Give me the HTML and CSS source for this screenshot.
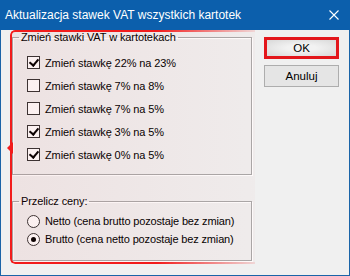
FILE: index.html
```html
<!DOCTYPE html>
<html lang="pl">
<head>
	<meta charset="UTF-8">
	<title>Aktualizacja stawek VAT</title>
	<link rel="stylesheet" href="styles.css">
</head>
<body>
<div class="window">
    <div class="titlebar">
        <span class="title">Aktualizacja stawek VAT wszystkich kartotek</span>
        <svg class="close" width="10" height="10" viewBox="0 0 10 10">
            <path d="M0.5 0.5 L9.5 9.5 M9.5 0.5 L0.5 9.5" stroke="#fff" stroke-width="1.1" fill="none"/>
        </svg>
    </div>
    <div class="client">
        <div class="mark">
            <fieldset class="group group-rates">
                <legend>Zmień stawki VAT w kartotekach</legend>
                <label class="row"><span class="check on"></span>Zmień stawkę 22% na 23%</label>
                <label class="row"><span class="check"></span>Zmień stawkę 7% na 8%</label>
                <label class="row"><span class="check"></span>Zmień stawkę 7% na 5%</label>
                <label class="row"><span class="check on"></span>Zmień stawkę 3% na 5%</label>
                <label class="row"><span class="check on"></span>Zmień stawkę 0% na 5%</label>
            </fieldset>
            <fieldset class="group group-prices">
                <legend>Przelicz ceny:</legend>
                <label class="row row-radio"><span class="radio"></span>Netto (cena brutto pozostaje bez zmian)</label>
                <label class="row row-radio"><span class="radio on"></span>Brutto (cena netto pozostaje bez zmian)</label>
            </fieldset>
            <svg class="notch" width="6" height="12" viewBox="0 0 6 12">
                <polygon points="6,0 0,6 6,12" fill="#f21c1c"/>
            </svg>
        </div>
        <div class="buttons">
            <button class="btn btn-default">OK</button>
            <button class="btn">Anuluj</button>
        </div>
    </div>
</div>
</body>
</html>
```
FILE: styles.css
```css
*
{
    margin: 0;
    padding: 0;
    box-sizing: border-box;
}
body
{
    font-family: "Liberation Sans", Arial, sans-serif;
    font-size: 11px;
    letter-spacing: -0.1px;
    color: #000;
    background: #f0f0f0;
}
.window
{
    width: 350px;
    height: 276px;
    border: 1px solid #1a64a8;
    border-top: 0;
    background: #f0f0f0;
}
.titlebar
{
    display: flex;
    align-items: center;
    justify-content: space-between;
    height: 30px;
    margin: 0 -1px;
    padding: 0 11px 1px 5px;
    background: #0c5fac;
    color: #fff;
}
.title
{
    font-size: 12px;
    letter-spacing: 0;
    line-height: 16px;
    white-space: nowrap;
}
.close
{
    display: block;
}
.client
{
    display: flex;
    align-items: flex-start;
    padding-left: 9px;
}
.mark
{
    position: relative;
    width: 245px;
    height: 234px;
    padding-left: 2px;
}
/* red bracket drawn over the screenshot */
.mark::before
{
    content: "";
    position: absolute;
    top: 0;
    left: 0;
    right: 0;
    bottom: 0;
    border: 2px solid #f21c1c;
    border-right: 0;
    border-radius: 5px 0 0 5px;
    box-shadow: 0 2px 2px rgba(240, 60, 60, .3);
    -webkit-mask-image: linear-gradient(to right, #000 60%, rgba(0, 0, 0, .12));
    mask-image: linear-gradient(to right, #000 60%, rgba(0, 0, 0, .12));
}
.mark::after
{
    content: "";
    position: absolute;
    top: 2px;
    left: 2px;
    right: 0;
    bottom: 2px;
    background: linear-gradient(to right, rgba(200, 40, 40, .07), rgba(200, 40, 40, .025));
    pointer-events: none;
}
.notch
{
    position: absolute;
    left: -3px;
    top: 112px;
}
.group
{
    width: 240px;
    border: 1px solid #a9a9a9;
    box-shadow: inset 1px 1px 0 #fff, 1px 1px 0 #fff;
    padding: 0 0 8px 0;
}
.group legend
{
    margin-left: 6px;
    padding: 0 2px;
    line-height: 15px;
    white-space: nowrap;
}
.group-rates
{
    height: 145px;
    padding-top: 6px;
}
.group-prices
{
    margin-top: 19px;
    height: 67px;
    padding-top: 3px;
}
.row
{
    display: flex;
    align-items: center;
    height: 23px;
    padding-left: 14px;
    white-space: nowrap;
}
.row-radio
{
    height: 18px;
    letter-spacing: -0.15px;
}
.check
{
    width: 13px;
    height: 13px;
    margin-right: 5px;
    border: 1px solid #333;
    background: #fff;
    position: relative;
}
.check.on::after
{
    content: "";
    position: absolute;
    left: 3px;
    top: 0px;
    width: 4px;
    height: 7px;
    border: solid #000;
    border-width: 0 2px 2px 0;
    transform: rotate(40deg);
}
.radio
{
    width: 13px;
    height: 13px;
    margin-right: 5px;
    border: 1px solid #333;
    border-radius: 50%;
    background: #fff;
    position: relative;
}
.radio.on::after
{
    content: "";
    position: absolute;
    left: 3px;
    top: 3px;
    width: 5px;
    height: 5px;
    border-radius: 50%;
    background: #000;
}
.buttons
{
    display: flex;
    flex-direction: column;
    gap: 6px;
    margin-left: 9px;
    padding-top: 7px;
}
.btn
{
    width: 75px;
    height: 22px;
    font-family: inherit;
    font-size: 11.5px;
    color: #000;
    border: 1px solid #adadad;
    background: #e5e5e5;
}
.btn-default
{
    border: 3px solid #e3161b;
    background: radial-gradient(ellipse at center, #f2f2f2 30%, #d8d8d8 100%);
}
```
